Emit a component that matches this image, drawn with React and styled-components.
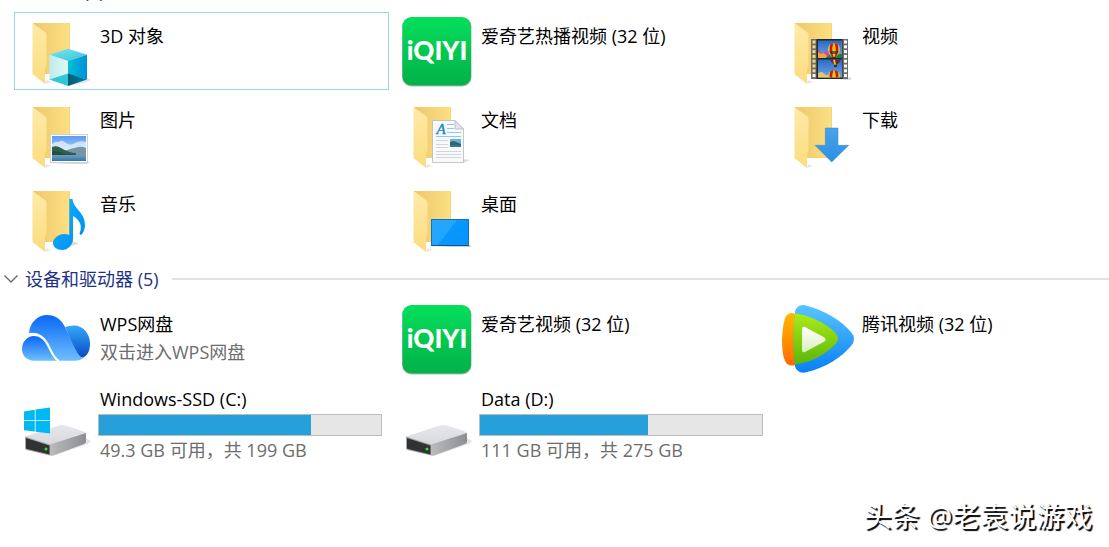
import { useState } from 'react';
import styled, { createGlobalStyle } from 'styled-components';

const GlobalStyle = createGlobalStyle`
	* {
		box-sizing: border-box;
	}

	body {
		margin: 0;
		background: #fff;
		color: #000;
		font-family: 'Open Sans', 'Noto Sans CJK SC', sans-serif;
		font-size: 18px;
		line-height: 27px;
		overflow: hidden;
	}
`;

/* the list is scrolled a little, so the first heading is nearly out of view */
const Explorer = styled.main`
	margin-top: -30px;
`;

const GroupHeader = styled.h2`
	display: flex;
	align-items: center;
	gap: 13px;
	height: 42px;
	margin: 0;
	font-size: 18px;
	font-weight: 400;

	&::after {
		content: '';
		flex: 1;
		height: 2px;
		background: #e2e2e2;
	}
`;

const GroupToggle = styled.button`
	display: flex;
	align-items: center;
	gap: 7px;
	padding: 0 0 0 4px;
	border: 0;
	background: none;
	color: #1e3287;
	font: inherit;
	cursor: pointer;
`;

const Chevron = styled.svg`
	width: 14px;
	height: 10px;
	fill: none;
	stroke: #666;
	transform: ${({ $open }) => ($open ? 'none' : 'rotate(-90deg)')};
`;

const TileGrid = styled.ul`
	display: grid;
	grid-template-columns: 375px 375px minmax(0, 375px);
	grid-auto-rows: 78px;
	gap: 6px;
	margin: 0;
	padding: 0 0 0 14px;
	list-style: none;
`;

const TileItem = styled.li`
	display: flex;
	gap: 6px;
	padding: 2px 6px 2px 5px;
	border: 1px solid ${({ $selected }) => ($selected ? '#99d1ff' : 'transparent')};

	&:hover {
		background: ${({ $selected }) => ($selected ? 'transparent' : '#e5f3ff')};
	}
`;

const Icon = styled.svg`
	flex: none;
	width: 72px;
	height: 72px;
`;

const TileBody = styled.div`
	flex: 1;
	min-width: 0;
	padding-top: ${({ $drive }) => ($drive ? '0' : '9px')};
	white-space: nowrap;
`;

const TileName = styled.div`
	padding: 0 0 2px 2px;
	line-height: 25px;
`;

const TileNote = styled.div`
	padding-left: 2px;
	color: #6d6d6d;
`;

const Usage = styled.progress`
	display: block;
	appearance: none;
	width: 100%;
	height: 22px;
	margin-bottom: 1px;
	border: 1px solid #bcbcbc;
	background: #e6e6e6;

	&::-webkit-progress-bar {
		background: #e6e6e6;
	}

	&::-webkit-progress-value {
		background: #26a0da;
	}
`;

const Watermark = styled.div`
	position: absolute;
	right: 17px;
	bottom: 11px;
	color: #fff;
	font-size: 28px;
	line-height: 40px;
	text-shadow: 2px 2px 1px #000;
`;

const Gradient = ({ id, from, to, x2 = 0, y2 = 1 }) => (
	<linearGradient id={id} x1='0' y1='0' x2={x2} y2={y2}>
		<stop offset='0' stopColor={from} />
		<stop offset='1' stopColor={to} />
	</linearGradient>
);

const GradientDefs = styled.svg`
	display: block;
	width: 0;
	height: 0;
`;

const SharedGradients = () => (
	<GradientDefs aria-hidden='true'>
		<defs>
			<Gradient id='folderBack' from='#edc86b' to='#fce083' x2='1' y2='0' />
			<Gradient id='folderFlap' from='#ffeaa8' to='#fbdc7e' />
			<Gradient id='cubeTop' from='#7de6ee' to='#35c3dd' x2='1' />
			<Gradient id='cubeLeft' from='#bdebed' to='#e0f7f7' x2='1' y2='0' />
			<Gradient id='cubeRight' from='#00c0d6' to='#0090d8' x2='1' y2='0' />
			<Gradient id='cubeDark' from='#005a73' to='#0085a8' x2='1' y2='0' />
			<Gradient id='qiyi' from='#05df5b' to='#02b149' />
			<Gradient id='sky' from='#5d9cf5' to='#e8f4fd' />
			<Gradient id='lake' from='#679fc4' to='#3f739f' />
			<Gradient id='film' from='#2867c7' to='#6fa9ec' />
			<Gradient id='arrow' from='#4ba3ea' to='#2c8ee4' />
			<Gradient id='note' from='#12b5fa' to='#0089f4' x2='1' />
			<Gradient id='screen' from='#0a9cff' to='#0792fb' x2='1' />
			<Gradient id='cloudMain' from='#0b67f5' to='#6dc0ff' />
			<Gradient id='cloudRight' from='#35a8fa' to='#074bc0' />
			<Gradient id='tvBlue' from='#59c5ff' to='#087ff7' />
			<Gradient id='tvOrange' from='#ffb900' to='#ff6b00' />
			<Gradient id='tvGreen' from='#acec16' to='#5bb50b' />
			<Gradient id='tvPlay' from='#ffffff' to='#d8efba' />
			<Gradient id='driveTop' from='#e6e7eb' to='#d8d9dd' />
			<Gradient id='driveSide' from='#babbbd' to='#8c8e91' x2='1' y2='0' />
		</defs>
	</GradientDefs>
);

const Folder = () => (
	<>
		<path d='M25 69l6-2-5-2z' fill='#e6e6e6' />
		<path d='M13 8h37v51H22z' fill='url(#folderBack)' />
		<path d='M49.500 8v50.500H26' fill='none' stroke='#efce72' strokeWidth='.6' />
		<path d='M12.500 8l13 9.500q1 1 1 2.500v31l-1.500 3v15L12.500 59z' fill='url(#folderFlap)' />
	</>
);

const ObjectsIcon = () => (
	<>
		<Folder />
		<path d='M48 71l19-4 4-2-4-2z' fill='#e3e3e3' />
		<path d='M48 33.700L67 39.700 48 46 29.300 39.700z' fill='url(#cubeTop)' />
		<path d='M29.300 39.700L48 46v13l-18.700 5.500z' fill='url(#cubeLeft)' />
		<path d='M67 39.700L48 46v13l19 5.500z' fill='url(#cubeRight)' />
		<path d='M29.300 64.500L48 58.500V71z' fill='#2fc7d6' />
		<path d='M67 64.500L48 58.500V71z' fill='url(#cubeDark)' />
	</>
);

const QiyiIcon = () => (
	<>
		<rect x='1' y='2.500' width='69.500' height='69' rx='9' fill='#7d8b82' opacity='.6' />
		<rect x='1.500' y='2' width='68.500' height='68.500' rx='9' fill='url(#qiyi)' />
		<text
			x='36'
			y='45'
			textAnchor='middle'
			fontFamily='Lato'
			fontWeight='900'
			fontSize='26'
			fill='#fff'>
			iQIYI
		</text>
	</>
);

const Balloon = ({ y }) => (
	<g transform={`translate(52 ${y})`}>
		<path d='M-6 0a6 6 0 0 1 12 0q0 4-4 8h-4q-4-4-4-8z' fill='#f2c21a' />
		<path d='M-3.500-5Q-6 1-2 8h1.500Q-3 1-.5-6zM3.500-5Q6 1 2 8H.5Q3 1 .5-6z' fill='#b91f27' />
		<path d='M-5 2l10 0-2 3h-6z' fill='#30291f' opacity='.65' />
		<rect x='-1.500' y='8' width='3' height='2' fill='#4d2a16' />
	</g>
);

const VideoIcon = () => (
	<>
		<Folder />
		<path d='M60 65h9v-3z' fill='#ddd' />
		<rect x='29' y='24' width='37' height='40' fill='#6d6d6d' />
		<rect x='34.500' y='24' width='26' height='40' fill='#242424' />
		<svg x='36' y='25.500' width='24' height='17.500' viewBox='36 25.500 24 17.500'>
			<rect x='36' y='25' width='24' height='19' fill='url(#film)' />
			<path d='M36 34l4 5 4-3 4 4v4H36z' fill='#d5448c' />
			<path d='M36 37l3 2 3-1 4 4v2H36z' fill='#f1a53c' />
			<path d='M44 42l5-2 11-1v5H44z' fill='#14804b' />
			<Balloon y={34} />
		</svg>
		<svg x='36' y='44.500' width='24' height='18' viewBox='36 44.500 24 18'>
			<rect x='36' y='44' width='24' height='19' fill='url(#film)' />
			<path d='M48 44.500h11q-2 4-4 5h-3q-3-2-4-5z' fill='#742231' />
			<path d='M51 44.500h2l1 5h-2z' fill='#e7bf21' />
			<rect x='52' y='50' width='3' height='2' fill='#402d26' />
			<path d='M36 58l4-1 4 3 4 0v4H36z' fill='#e5c66f' />
			<Balloon y={61} />
		</svg>
		{[...Array(8).keys()].map((i) => (
			<g key={i}>
				<rect x='30.500' y={25.5 + i * 4.8} width='3' height='3' fill={i < 7 ? '#f4d681' : '#fff'} />
				<rect x='62' y={25.5 + i * 4.8} width='3' height='3' fill='#fff' />
			</g>
		))}
	</>
);

const PictureIcon = () => (
	<>
		<Folder />
		<path d='M31 65h36l3-2z' fill='#d6d6d6' />
		<rect x='30.500' y='35.500' width='37' height='28' fill='#fff' stroke='#cfd2d6' />
		<rect x='32' y='37' width='34' height='25' fill='url(#sky)' />
		<path d='M32 45q4-3 7-2 3-3 7 1 5 3 9 0 5-3 11-1v12H32z' fill='#edf6fb' opacity='.7' />
		<path d='M44 52q9-3 14-4 4-1 8 1v7H44z' fill='#7895a1' />
		<path d='M32 48q5-2 9 1 8 5 15 5v3H32z' fill='#315f4d' />
		<path d='M32 52q7 0 13 3l11 1v2H32z' fill='#23503a' />
		<rect x='32' y='56' width='34' height='6' fill='url(#lake)' />
	</>
);

const DocumentIcon = () => (
	<>
		<Folder />
		<path d='M62 64l7-3-7-1z' fill='#ddd' />
		<path d='M31.500 21.500h22.500l8.500 8.500v33.500h-31z' fill='#f7f9fb' stroke='#b6babf' strokeWidth='.8' />
		<path d='M54 21.500V30h8.500z' fill='#e1e4e8' stroke='#b6babf' strokeWidth='.8' />
		<text
			x='35.500'
			y='35'
			fontFamily='Liberation Serif'
			fontStyle='italic'
			fontSize='15'
			stroke='#1787ce'
			strokeWidth='.4'
			fill='#1787ce'>
			A
		</text>
		<path d='M46 25.500h7M46 29.500h7M46 33.500h14M35 37.500h25' stroke='#8ecaf0' />
		<path
			d='M35 41.500h12M35 45.500h12M35 48.500h12M35 52.500h25M35 55.500h25M35 58.500h25'
			stroke='#d2d6da'
		/>
		<rect x='49' y='40' width='11' height='8' fill='#66afe5' />
		<path d='M49 43l4-1 7 3v1H49z' fill='#316858' />
		<path d='M49 46h11v2H49z' fill='#3374ad' />
	</>
);

const DownloadIcon = () => (
	<>
		<Folder />
		<path d='M43.300 29H56v17.300h10.700L49.700 63 33 46.300h10.300z' fill='url(#arrow)' stroke='#3086cf' strokeWidth='.5' />
	</>
);

const MusicIcon = () => (
	<>
		<Folder />
		<path d='M50 63l9-2-6-3z' fill='#ddd' />
		<path
			d='M49.300 16h3.200c1 10 12.500 13 12.500 26 0 4-1.500 8-4 10-1-.3-1.500-.8-1.500-1.500 3.500-8 0-13.500-6.500-17.500v23c0 6-5 11-11 11-5 0-9-3-9-7 0-5 6-9 11-9 2 0 3.700.3 5.300 1z'
			fill='url(#note)'
		/>
	</>
);

const DesktopIcon = () => (
	<>
		<Folder />
		<path d='M31 64h38l2-1-3-1z' fill='#ccc' />
		<rect x='30.500' y='36.500' width='37' height='26' fill='url(#screen)' stroke='#1571b5' />
		<path d='M31 37h25L37 62h-6z' fill='#39b0ff' opacity='.55' />
		<rect x='31' y='62' width='37' height='1' fill='#0c5790' />
	</>
);

const WpsIcon = () => (
	<>
		<path d='M45 24q4-1.500 9-1.500c9 0 16 8 16 18 0 7-2 12-8 14.500-8-3-12-22-17-31z' fill='url(#cloudRight)' />
		<path
			d='M9 30c1-11 9-18 18-18 8 0 14 4 18 12 5 10 9 21 14 28 2 2.500 4 3 6 1.500-3 3-6 4.200-10 4.200H38C30 51 25 29 9 30z'
			fill='url(#cloudMain)'
		/>
		<path
			d='M14 33c5 0 9 3 12 8l6 10c2 4 4 6 6 6.700H14C7 57.700 2 53 2 46s5-13 12-13z'
			fill='url(#cloudMain)'
		/>
		<path d='M9 31c8-1 14 2 18 9 4 7 6 15 12 18' fill='none' stroke='#fff' strokeWidth='2' />
	</>
);

const TencentIcon = () => (
	<>
		<path d='M13 11Q8 8 4 13 1 18 0 36q0 16 3 22 3 6 10 4z' fill='url(#tvOrange)' />
		<path
			d='M13 9c1-5 5-8 11-6.500C42 7 60 18 69 29q6 7 0 14C60 54 43 65 25 69c-6 2-11-1-12-6-2-17-2-38 0-54z'
			fill='url(#tvBlue)'
		/>
		<path
			d='M13 10.500c13 1 32 10 41 20q4 5 0 10C45 51 28 60 12.800 61.500c-2-16-2-35 .2-51z'
			fill='url(#tvGreen)'
		/>
		<path d='M20 26q0-3 3-2l19.500 10.500q2 2 0 4L23 49q-3 1-3-2z' fill='url(#tvPlay)' />
	</>
);

const Drive = () => (
	<>
		<path d='M30 70l38-13 3-3-5-3z' fill='#e4e4e4' />
		<path d='M5 49.500L38 38.800q4-1.300 8-.3l18 6q2 .5 2 2.500L30 58z' fill='url(#driveTop)' />
		<path d='M30 57.500L66 46v9q0 1-2 2L33 68.500q-1 .5-3 0z' fill='url(#driveSide)' />
		<path d='M5 49.500l25 8v11L6.500 63Q5 62.500 5 61z' fill='#a6a7a9' />
		<path d='M6 51l23.500 7.500v9L7 62q-1 0-1-1z' fill='#303234' />
		<circle cx='26' cy='62' r='1.500' fill='#2ae52a' />
	</>
);

const SystemDriveIcon = () => (
	<>
		<Drive />
		<path
			d='M4 24.500l10.800-1.700v10.400H4zM15.600 22.600L30 20.500v12.700H15.600zM4 34h10.800v10.600L4 43.300zM15.600 34H30v12.500l-14.400-1.800z'
			fill='#00b9f2'
		/>
	</>
);

const folders = [
	{ name: '3D 对象', Art: ObjectsIcon, selected: true },
	{ name: '爱奇艺热播视频 (32 位)', Art: QiyiIcon },
	{ name: '视频', Art: VideoIcon },
	{ name: '图片', Art: PictureIcon },
	{ name: '文档', Art: DocumentIcon },
	{ name: '下载', Art: DownloadIcon },
	{ name: '音乐', Art: MusicIcon },
	{ name: '桌面', Art: DesktopIcon },
];

const devices = [
	{ name: 'WPS网盘', note: '双击进入WPS网盘', Art: WpsIcon },
	{ name: '爱奇艺视频 (32 位)', Art: QiyiIcon },
	{ name: '腾讯视频 (32 位)', Art: TencentIcon },
	{ name: 'Windows-SSD (C:)', free: 49.3, total: 199, Art: SystemDriveIcon },
	{ name: 'Data (D:)', free: 111, total: 275, Art: Drive },
];

const Tile = ({ item }) => {
	const { name, note, free, total, selected, Art } = item;

	return (
		<TileItem $selected={selected}>
			<Icon viewBox='0 0 72 72' aria-hidden='true'>
				<Art />
			</Icon>
			<TileBody $drive={Boolean(total)}>
				<TileName>{name}</TileName>
				{note && <TileNote>{note}</TileNote>}
				{total && (
					<>
						<Usage value={total - free} max={total} aria-label={name} />
						<TileNote>
							{free} GB 可用，共 {total} GB
						</TileNote>
					</>
				)}
			</TileBody>
		</TileItem>
	);
};

const Group = ({ title, items }) => {
	const [open, setOpen] = useState(true);

	return (
		<section>
			<GroupHeader>
				<GroupToggle aria-expanded={open} onClick={() => setOpen(!open)}>
					<Chevron $open={open} viewBox='0 0 14 10' aria-hidden='true'>
						<path d='M.5 1.500l6.500 6.500 6.500-6.500' strokeWidth='1.300' />
					</Chevron>
					{title} ({items.length})
				</GroupToggle>
			</GroupHeader>
			{open && (
				<TileGrid>
					{items.map((item) => (
						<Tile key={item.name} item={item} />
					))}
				</TileGrid>
			)}
		</section>
	);
};

const App = () => {
	return (
		<>
			<GlobalStyle />
			<SharedGradients />
			<Explorer>
				<Group title='文件夹' items={folders} />
				<Group title='设备和驱动器' items={devices} />
			</Explorer>
			<Watermark>头条 @老袁说游戏</Watermark>
		</>
	);
};

export default App;
